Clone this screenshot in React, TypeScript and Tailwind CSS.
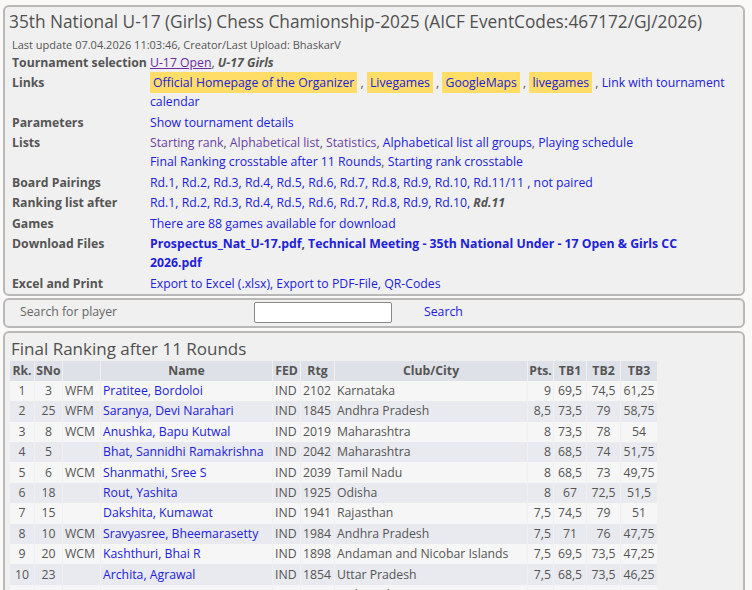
import React from "react";

const font = { fontFamily: '"Open Sans", "Noto Sans", sans-serif' };

function A({ children, hl, v }: { children: React.ReactNode; hl?: boolean; v?: boolean }) {
  if (hl) {
    return <span className="bg-[#ffdd66] px-[3px] py-[2px] text-[#2020dd]">{children}</span>;
  }
  return <span className={v ? "text-[#6a3fa5]" : "text-[#2020dd]"}>{children}</span>;
}

const info: [string, React.ReactNode][] = [
  [
    "Tournament selection",
    <>
      <span className="text-[#6a2aa0] underline">U-17 Open</span>, <b className="italic">U-17 Girls</b>
    </>,
  ],
  [
    "Links",
    <>
      <A hl>Official Homepage of the Organizer</A> , <A hl>Livegames</A> , <A hl>GoogleMaps</A> ,{" "}
      <A hl>livegames</A> , <A>Link with tournament calendar</A>
    </>,
  ],
  ["Parameters", <A>Show tournament details</A>],
  [
    "Lists",
    <>
      <A v>Starting rank</A>, <A v>Alphabetical list</A>, <A v>Statistics</A>, <A>Alphabetical list all groups</A>,{" "}
      <A>Playing schedule</A>
      <br />
      <A>Final Ranking crosstable after 11 Rounds</A>, <A>Starting rank crosstable</A>
    </>,
  ],
  [
    "Board Pairings",
    <A>Rd.1, Rd.2, Rd.3, Rd.4, Rd.5, Rd.6, Rd.7, Rd.8, Rd.9, Rd.10, Rd.11/11 , not paired</A>,
  ],
  [
    "Ranking list after",
    <>
      <A>Rd.1, Rd.2, Rd.3, Rd.4, Rd.5, Rd.6, Rd.7, Rd.8, Rd.9, Rd.10, </A>
      <b className="italic">Rd.11</b>
    </>,
  ],
  ["Games", <A>There are 88 games available for download</A>],
  [
    "Download Files",
    <b>
      <A>Prospectus_Nat_U-17.pdf</A>, <A>Technical Meeting - 35th National Under - 17 Open &amp; Girls CC 2026.pdf</A>
    </b>,
  ],
  ["Excel and Print", <A>Export to Excel (.xlsx), Export to PDF-File, QR-Codes</A>],
];

const rows = [
  [1, 3, "WFM", "Pratitee, Bordoloi", 2102, "Karnataka", "9", "69,5", "74,5", "61,25"],
  [2, 25, "WFM", "Saranya, Devi Narahari", 1845, "Andhra Pradesh", "8,5", "73,5", "79", "58,75"],
  [3, 8, "WCM", "Anushka, Bapu Kutwal", 2019, "Maharashtra", "8", "73,5", "78", "54"],
  [4, 5, "", "Bhat, Sannidhi Ramakrishna", 2042, "Maharashtra", "8", "68,5", "74", "51,75"],
  [5, 6, "WCM", "Shanmathi, Sree S", 2039, "Tamil Nadu", "8", "68,5", "73", "49,75"],
  [6, 18, "", "Rout, Yashita", 1925, "Odisha", "8", "67", "72,5", "51,5"],
  [7, 15, "", "Dakshita, Kumawat", 1941, "Rajasthan", "7,5", "74,5", "79", "51"],
  [8, 10, "WCM", "Sravyasree, Bheemarasetty", 1984, "Andhra Pradesh", "7,5", "71", "76", "47,75"],
  [9, 20, "WCM", "Kashthuri, Bhai R", 1898, "Andaman and Nicobar Islands", "7,5", "69,5", "73,5", "47,25"],
  [10, 23, "", "Archita, Agrawal", 1854, "Uttar Pradesh", "7,5", "68,5", "73,5", "46,25"],
  [11, 4, "WCM", "Tejaswini, Sagar", 2049, "Maharashtra", "7,5", "68", "72,5", "45,5"],
];

export default function App() {
  return (
    <div style={font} className="min-h-screen bg-[#faf9f7] pl-[3px] pr-[7px] pt-[5px] text-[12.25px] text-[#555]">
      {/* tournament info */}
      <div className="rounded-[6px] border-2 border-[#b8b8b8] bg-[#f0f0f0]">
        <h1 className="whitespace-nowrap px-[4px] pt-[3px] text-[17.3px] leading-[24px] text-[#505050]">
          35th National U-17 (Girls) Chess Chamionship-2025 (AICF EventCodes:467172/GJ/2026)
        </h1>
        <div className="px-[7px] pt-[4px] text-[11px] leading-[14px]">
          Last update 07.04.2026 11:03:46, Creator/Last Upload: BhaskarV
        </div>
        <div className="px-[7px]">
          {info.map(([label, val]) => (
            <div key={label} className="grid grid-cols-[138px_1fr] py-[0.75px] leading-[19px]">
              <div className="whitespace-nowrap font-bold text-[#555]">{label}</div>
              <div className="pr-2">{val}</div>
            </div>
          ))}
        </div>
      </div>

      {/* search */}
      <div className="mt-[2px] flex h-[30px] items-center rounded-[6px] border-2 border-[#b8b8b8] bg-[#f0f0f0]">
        <div className="w-[249px] pl-[15px] text-[#666]">Search for player</div>
        <div className="h-[21px] w-[138px] rounded-[2px] border border-[#888] bg-white" />
        <div className="pl-[32px] text-[#2020dd]">Search</div>
      </div>

      {/* ranking */}
      <div className="mt-[3px] rounded-[6px] border-2 border-[#b8b8b8] bg-[#f0f0f0] px-[4px] pb-2">
        <h2 className="pl-[2px] pt-[4px] text-[17px] leading-[24px] text-[#505050]">Final Ranking after 11 Rounds</h2>
        <table className="table-fixed border-separate border-spacing-x-px border-spacing-y-0">
          <colgroup>
            <col className="w-[24px]" />
            <col className="w-[27px]" />
            <col className="w-[37px]" />
            <col className="w-[171px]" />
            <col className="w-[27px]" />
            <col className="w-[33px]" />
            <col className="w-[192px]" />
            <col className="w-[25px]" />
            <col className="w-[32px]" />
            <col className="w-[33px]" />
            <col className="w-[36px]" />
          </colgroup>
          <thead>
            <tr className="h-[20.4px] bg-[#dfe1e8] font-bold">
              <th className="text-center">Rk.</th>
              <th className="text-center">SNo</th>
              <th></th>
              <th className="text-center">Name</th>
              <th className="text-center">FED</th>
              <th className="text-center">Rtg</th>
              <th className="text-center">Club/City</th>
              <th className="text-center">Pts.</th>
              <th className="text-center">TB1</th>
              <th className="text-center">TB2</th>
              <th className="text-center">TB3</th>
            </tr>
          </thead>
          <tbody>
            {rows.map((r, i) => (
              <tr key={i} className={`h-[20.4px] leading-[20px] ${i % 2 === 0 ? "bg-[#f6f6f6]" : "bg-[#e9eaf0]"}`}>
                <td className="text-center">{r[0]}</td>
                <td className="text-center">{r[1]}</td>
                <td className="pl-[2px]">{r[2]}</td>
                <td className="whitespace-nowrap pl-[2px] text-[#2020dd]">{r[3]}</td>
                <td className="pl-[2px]">IND</td>
                <td className="pl-[2px]">{r[4]}</td>
                <td className="whitespace-nowrap pl-[2px]">{r[5]}</td>
                <td className="pr-[2px] text-right">{r[6]}</td>
                <td className="text-center">{r[7]}</td>
                <td className="text-center">{r[8]}</td>
                <td className="text-center">{r[9]}</td>
              </tr>
            ))}
          </tbody>
        </table>
      </div>
    </div>
  );
}
